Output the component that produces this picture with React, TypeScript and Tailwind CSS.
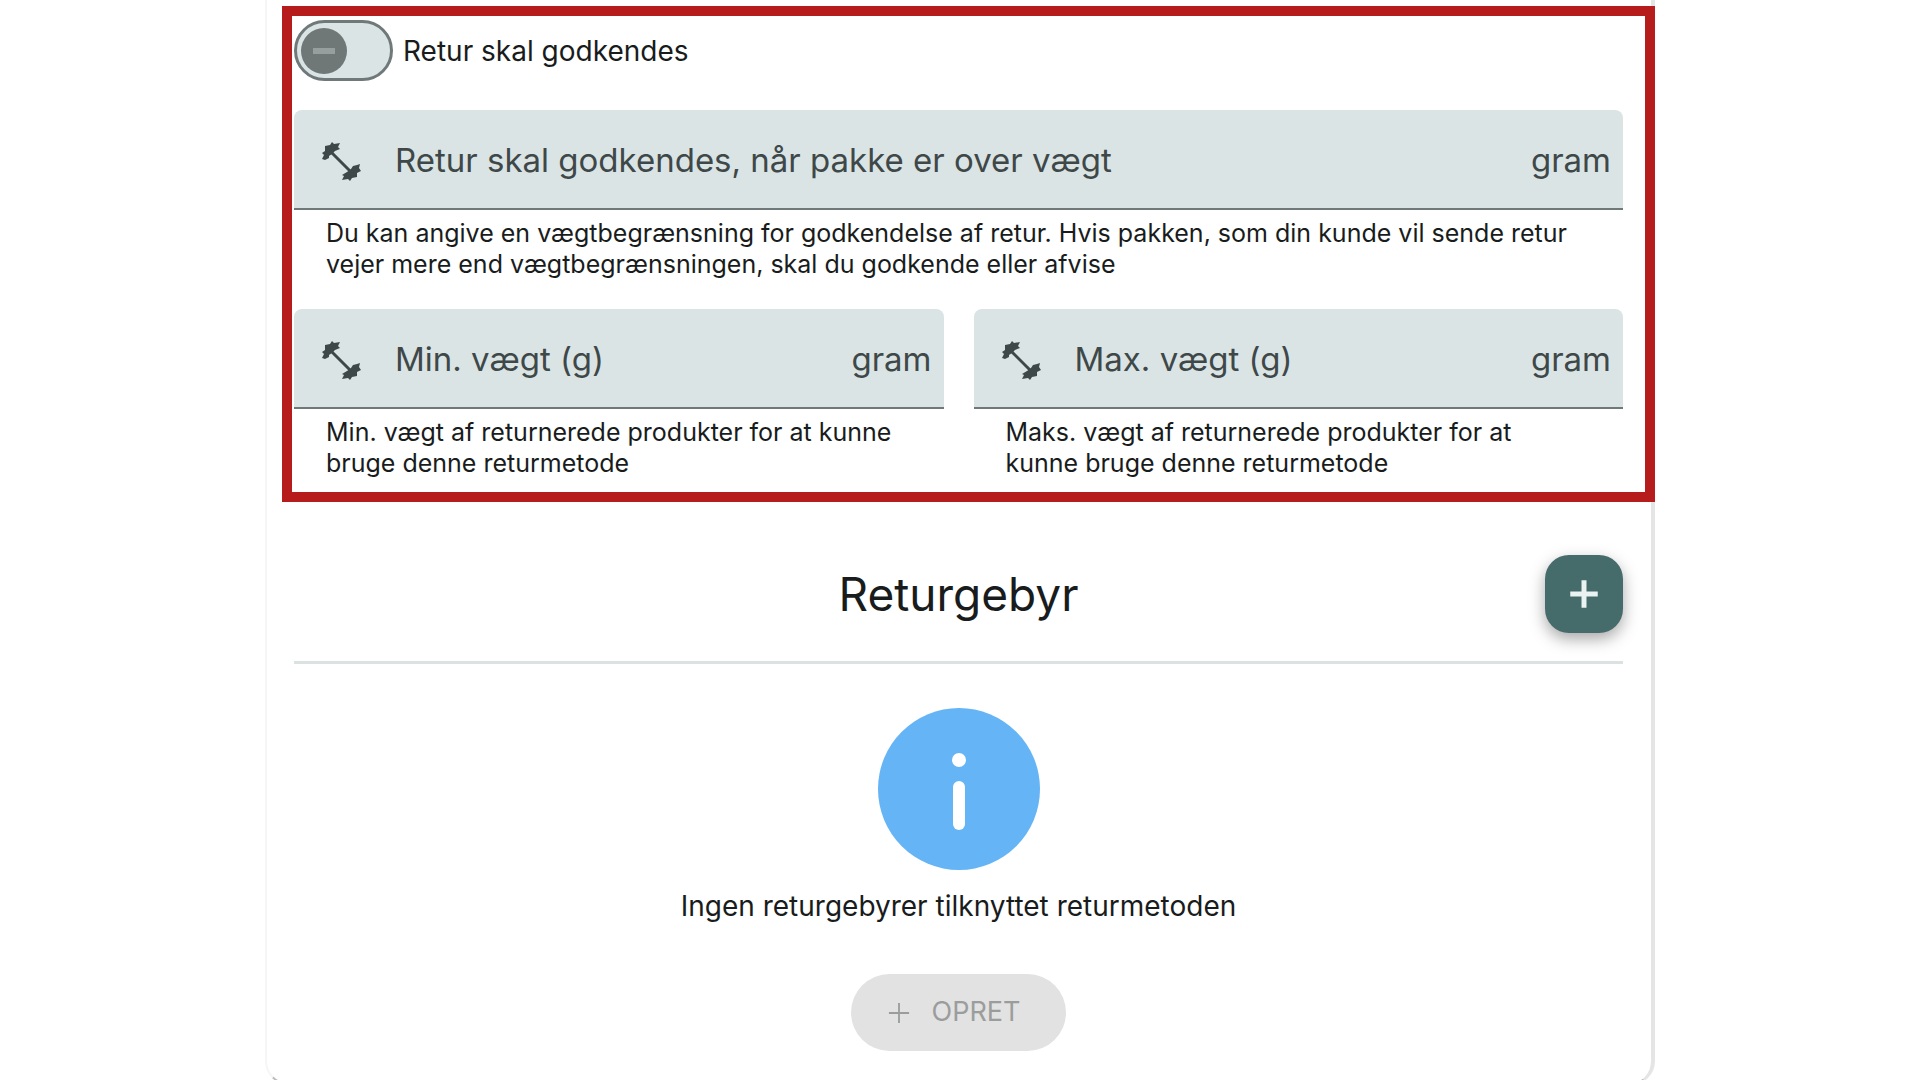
import type { ReactNode } from "react";

type WeightFieldProps = {
  id: string;
  label: string;
  children: ReactNode;
};

function DumbbellIcon() {
  return (
    <svg viewBox="0 0 40 40" className="size-10 shrink-0" fill="#3f4849" aria-hidden="true">
      <path d="M19 2 L17 6 L19 8 L14 10 L11 13 L8 15 L8 17 L4 19 L1 18 L3 14 L1 12 L4 10 L4 5 L9 4 L11 1 L13 3 Z" />
      <path d="M39 23 L38 27 L40 30 L36 32 L36 36 L31 37 L29 40 L27 38 L21 39 L23 35 L21 34 L26 31 L30 28 L32 25 L36 24 Z" />
      <path d="M9 10 L31 32" stroke="#3f4849" strokeWidth="3" />
    </svg>
  );
}

function PlusIcon({ className }: { className: string }) {
  return (
    <svg viewBox="0 0 24 24" className={className} fill="none" stroke="currentColor" aria-hidden="true">
      <path d="M12 1v22M1 12h22" />
    </svg>
  );
}

function WeightField({ id, label, children }: WeightFieldProps) {
  return (
    <div className="min-w-0 flex-1">
      <div className="flex h-[100px] items-center rounded-t-lg border-b-2 border-[#6f7979] bg-[#dae4e4] pt-1 pr-3 pl-[27px] text-[33px] text-[#3f4849]">
        <DumbbellIcon />
        <label htmlFor={id} className="ml-[34px] whitespace-nowrap">
          {label}
        </label>
        <input id={id} type="text" inputMode="numeric" className="min-w-0 flex-1 bg-transparent px-2 outline-none" />
        <span>gram</span>
      </div>
      <p className="mt-2 pr-10 pl-8 text-[25px] leading-[31px]">{children}</p>
    </div>
  );
}

export default function App() {
  return (
    <main className="h-screen overflow-hidden bg-white font-['Inter',sans-serif] text-[#191c1c]">
      <div className="mx-auto w-full max-w-[1390px] rounded-b-3xl border-r-4 border-b-2 border-l-2 border-r-[#e5e5e5] border-b-[#bdbdbd] border-l-[#f6f6f6] pt-1.5">
        <section className="-mr-1 ml-[15px] border-[10px] border-[#b71c1c] pt-1 pr-[22px] pb-[13px] pl-0.5">
          <div className="flex items-center gap-2.5">
            <div className="relative flex">
              <input
                id="approve"
                type="checkbox"
                className="h-[61px] w-[99px] appearance-none rounded-full border-[3px] border-[#6f7979] bg-[#dae4e4]"
              />
              <span className="pointer-events-none absolute top-2 left-[7px] flex size-[46px] items-center justify-center rounded-full bg-[#6f7777]">
                <span className="h-1.5 w-[22px] bg-[#969e9e]" />
              </span>
            </div>
            <label htmlFor="approve" className="text-[28px] leading-10">
              Retur skal godkendes
            </label>
          </div>

          <div className="mt-[29px] flex">
            <WeightField id="approve-weight" label="Retur skal godkendes, når pakke er over vægt">
              Du kan angive en vægtbegrænsning for godkendelse af retur. Hvis pakken, som din kunde vil sende retur
              vejer mere end vægtbegrænsningen, skal du godkende eller afvise
            </WeightField>
          </div>

          <div className="mt-[29px] flex gap-[30px]">
            <WeightField id="min-weight" label="Min. vægt (g)">
              Min. vægt af returnerede produkter for at kunne bruge denne returmetode
            </WeightField>
            <WeightField id="max-weight" label="Max. vægt (g)">
              Maks. vægt af returnerede produkter for at kunne bruge denne returmetode
            </WeightField>
          </div>
        </section>

        <section className="mr-7 ml-[27px]">
          <header className="relative flex items-center justify-center border-b-[3px] border-[#dae2e2] pt-[53px] pb-7">
            <h2 className="text-[46px] leading-[78px]">Returgebyr</h2>
            <button
              type="button"
              aria-label="Opret returgebyr"
              className="absolute right-0 flex size-[78px] items-center justify-center rounded-3xl bg-[#466b6b] text-[#eaf2f2] shadow-[0_6px_16px_rgba(0,0,0,0.35)]"
            >
              <PlusIcon className="size-[30px] stroke-4" />
            </button>
          </header>

          <div className="flex flex-col items-center pt-11 pb-8">
            <svg viewBox="0 0 162 162" className="size-[162px]" aria-hidden="true">
              <circle cx="81" cy="81" r="81" fill="#64b4f6" />
              <circle cx="81" cy="52" r="7" fill="#fff" />
              <rect x="75" y="73" width="12" height="49" rx="6" fill="#fff" />
            </svg>
            <p className="mt-4 text-[28px] leading-10">Ingen returgebyrer tilknyttet returmetoden</p>
            <button
              type="button"
              disabled
              className="mt-12 flex h-[77px] items-center gap-[22px] rounded-full bg-[#e2e2e2] pr-[46px] pl-[37px] text-[27px] text-[#9b9d9d]"
            >
              <PlusIcon className="size-[22px] stroke-2" />
              OPRET
            </button>
          </div>
        </section>
      </div>
    </main>
  );
}
